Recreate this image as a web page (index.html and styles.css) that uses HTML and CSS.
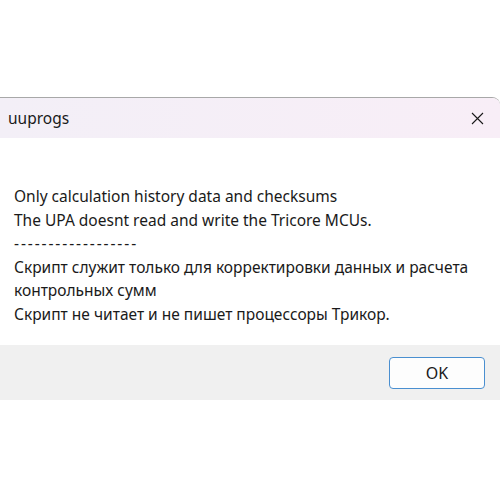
FILE: index.html
```html
<!DOCTYPE html>
<html lang="ru">
<head>
  <meta charset="UTF-8" />
  <title>uuprogs</title>
  <link rel="stylesheet" href="styles.css">
</head>
<body>
  <div class="dialog">
    <div class="titlebar">
      <span class="title">uuprogs</span>
      <button class="close" type="button" aria-label="Закрыть">
        <svg width="13" height="13" viewBox="0 0 13 13"><path d="M1 1 L12 12 M12 1 L1 12" stroke="#1a1a1a" stroke-width="1.1" fill="none"/></svg>
      </button>
    </div>
    <div class="content">
      <p>Only calculation history data and checksums</p>
      <p>The UPA doesnt read and write the Tricore MCUs.</p>
      <p class="sep">------------------</p>
      <p>Скрипт служит только для корректировки данных и расчета контрольных сумм</p>
      <p>Скрипт не читает и не пишет процессоры Трикор.</p>
    </div>
    <div class="footer">
      <button class="ok" type="button">OK</button>
    </div>
  </div>
</body>
</html>
```

FILE: styles.css
```css
* { box-sizing: border-box; }
body { margin: 0; padding-top: 97px; background: #fff; font-family: 'Noto Sans', 'Open Sans', sans-serif; color: #1a1a1a; }
.dialog { width: 500px; border-top: 1px solid #a8a8a8; border-top-right-radius: 8px; overflow: hidden; }
.titlebar { height: 40px; display: flex; align-items: center; justify-content: space-between; padding: 0 16px 0 8px; background: linear-gradient(90deg, #f3eff7, #f8eef7); }
.title { font-size: 15.5px; }
.close { border: none; background: none; padding: 0; width: 14px; height: 14px; display: flex; align-items: center; justify-content: center; }
.content { height: 207px; padding: 47px 14px 0 14px; font-size: 15.5px; line-height: 23.5px; }
.content p { margin: 0; }
.content .sep { letter-spacing: 1.9px; }
.footer { height: 55px; background: #f0f0f0; display: flex; justify-content: flex-end; align-items: flex-start; padding: 12px 15px 0 0; }
.ok { width: 96px; height: 32px; background: #fdfdfd; border: 1px solid #4a8fd0; border-radius: 4px; font-family: inherit; font-size: 16px; color: #1a1a1a; }
```
